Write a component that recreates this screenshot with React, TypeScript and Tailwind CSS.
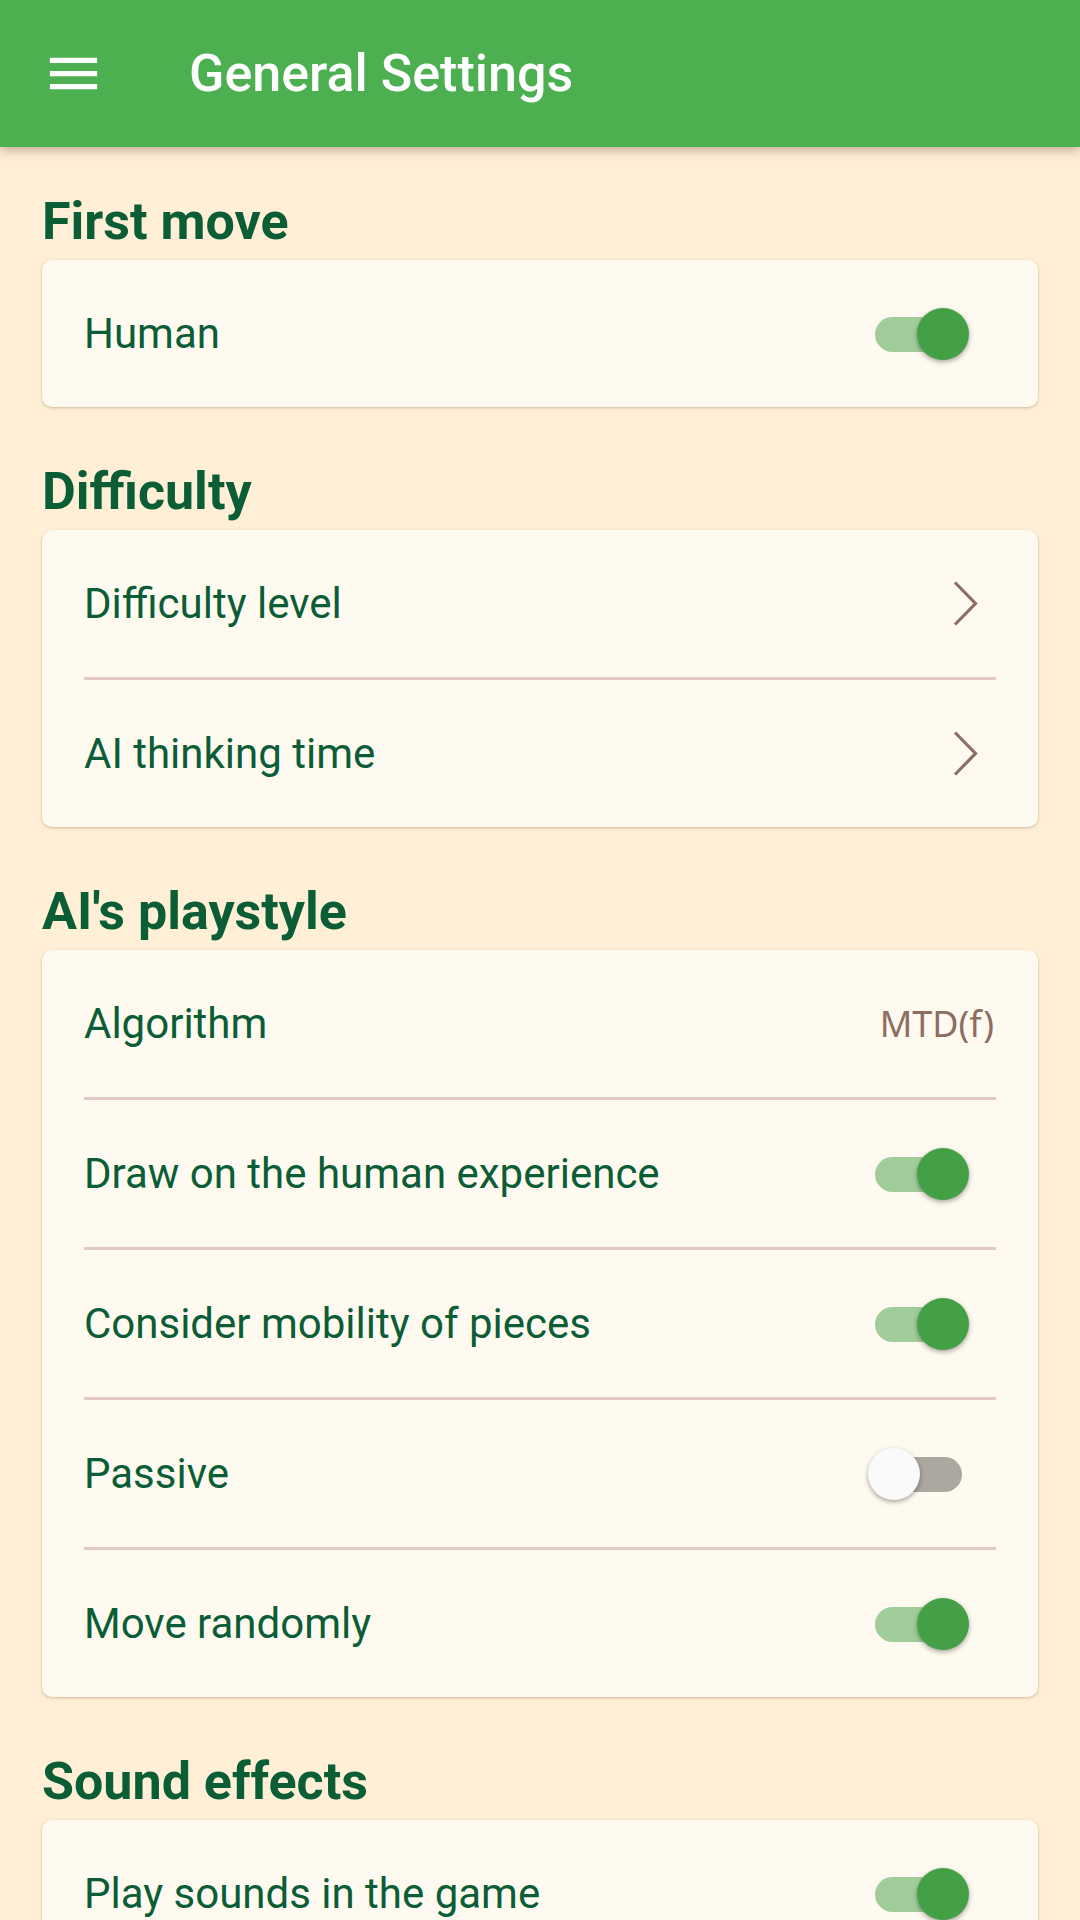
import React from "react";

const GREEN_TEXT = "text-[#0b5d36]";

function Switch({ on }: { on: boolean }) {
  return (
    <div className="relative w-[101px] h-[52px] mr-[27px] shrink-0">
      <div
        className={
          "absolute left-[7px] top-[9px] w-[87px] h-[35px] rounded-full " +
          (on ? "bg-[#a1cd9b]" : "bg-[#aca89f]")
        }
      />
      <div
        className={
          "absolute top-0 w-[52px] h-[52px] rounded-full shadow-[0_2px_5px_rgba(0,0,0,0.35)] " +
          (on ? "right-0 bg-[#43a047]" : "left-0 bg-[#fafafa]")
        }
      />
    </div>
  );
}

function Chevron() {
  return (
    <svg width="27" height="47" viewBox="0 0 27 47" className="mr-[17px] shrink-0" fill="none">
      <polyline points="3,2.5 23.5,23.5 3,44.5" stroke="#8d6e63" strokeWidth="3.2" strokeLinecap="butt" strokeLinejoin="miter" />
    </svg>
  );
}

type Row = { label: string; kind: "switch" | "chevron" | "value"; on?: boolean; value?: string };

function Card({ rows }: { rows: Row[] }) {
  return (
    <div className="bg-[#fffaf0] rounded-[10px] shadow-[0_1px_3px_rgba(90,60,20,0.3)] px-[42px]">
      {rows.map((r, i) => (
        <React.Fragment key={r.label}>
          {i > 0 && <div className="h-[3px] bg-[#e2c9c1]" />}
          <div className="h-[147px] flex items-center justify-between">
            <span className={"text-[42px] leading-none " + GREEN_TEXT}>{r.label}</span>
            {r.kind === "switch" && <Switch on={!!r.on} />}
            {r.kind === "chevron" && <Chevron />}
            {r.kind === "value" && (
              <span className="text-[36px] leading-none text-[#8d6e63] mr-[2px]" style={{ fontFamily: '"Noto Sans", "Open Sans", sans-serif' }}>
                {r.value}
              </span>
            )}
          </div>
        </React.Fragment>
      ))}
    </div>
  );
}

function Section({ title, rows }: { title: string; rows: Row[] }) {
  return (
    <section>
      <h2 className={"text-[52px] leading-[62px] font-bold mb-[7px] " + GREEN_TEXT}>{title}</h2>
      <Card rows={rows} />
    </section>
  );
}

export default function App() {
  return (
    <div
      className="w-[1080px] h-[1920px] overflow-hidden bg-[#ffefd6] flex flex-col"
      style={{ fontFamily: 'Roboto, "Noto Sans", sans-serif' }}
    >
      <header className="relative z-10 h-[147px] shrink-0 bg-[#4caf50] flex items-center shadow-[0_3px_10px_rgba(60,40,10,0.35)]">
        <svg width="63" height="63" viewBox="0 0 24 24" className="ml-[42px] shrink-0" fill="#ffffff">
          <path d="M3 18h18v-2H3v2zm0-5h18v-2H3v2zm0-7v2h18V6H3z" />
        </svg>
        <h1 className="ml-[84px] text-[52px] leading-none font-medium text-white">General Settings</h1>
      </header>
      <main className="px-[42px] pt-[44px] flex flex-col gap-[54px]">
        <Section title="First move" rows={[{ label: "Human", kind: "switch", on: true }]} />
        <Section
          title="Difficulty"
          rows={[
            { label: "Difficulty level", kind: "chevron" },
            { label: "AI thinking time", kind: "chevron" },
          ]}
        />
        <Section
          title="AI's playstyle"
          rows={[
            { label: "Algorithm", kind: "value", value: "MTD(f)" },
            { label: "Draw on the human experience", kind: "switch", on: true },
            { label: "Consider mobility of pieces", kind: "switch", on: true },
            { label: "Passive", kind: "switch", on: false },
            { label: "Move randomly", kind: "switch", on: true },
          ]}
        />
        <Section
          title="Sound effects"
          rows={[{ label: "Play sounds in the game", kind: "switch", on: true }]}
        />
      </main>
    </div>
  );
}
